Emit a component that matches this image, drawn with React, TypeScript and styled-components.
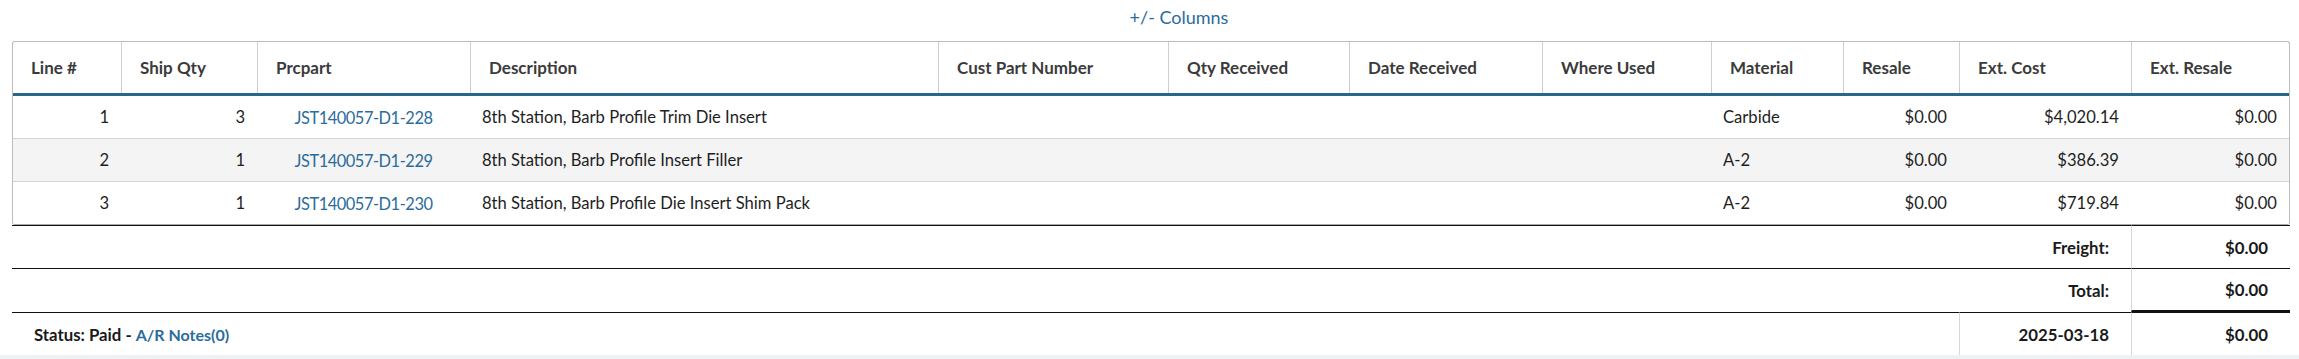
import React from "react";
import styled, { createGlobalStyle } from "styled-components";

const GlobalStyle = createGlobalStyle`
  html, body {
    margin: 0;
    padding: 0;
    background: #eef2f2;
  }
  body {
    font-family: Lato, "Open Sans", "Liberation Sans", sans-serif;
    color: #222;
  }
  * { box-sizing: border-box; }
`;

const COLS = "108px 136px 213px 468px 230px 181px 193px 169px 132px 116px 172px 158px";

const Page = styled.div`
  background: #ffffff;
  padding: 0 9px 0 12px;
`;

const ToggleBar = styled.div`
  height: 41px;
  display: flex;
  justify-content: center;
  align-items: flex-start;
  padding-top: 5px;
  padding-left: 56px;
`;

const ToggleLink = styled.a`
  color: #2b6c9c;
  font-size: 18px;
  line-height: 24px;
  text-decoration: none;
  cursor: pointer;
`;

const Table = styled.div`
  border: 1px solid #bcbcbc;
  border-bottom-color: #a8a8a8;
  border-radius: 3px;
  overflow: hidden;
`;

const HeadRow = styled.div`
  display: grid;
  grid-template-columns: ${COLS};
  height: 54px;
  border-bottom: 3px solid #2b6587;
`;

const HeadCell = styled.div`
  display: flex;
  align-items: center;
  padding: 0 18px;
  font-size: 17px;
  font-weight: 700;
  color: #3b3b3b;
  white-space: nowrap;
  & + & {
    border-left: 1px solid #cfcfcf;
  }
`;

const BodyRow = styled.div<{ $striped?: boolean; $first?: boolean }>`
  display: grid;
  grid-template-columns: ${COLS};
  height: ${(p) => (p.$first ? "42px" : "43px")};
  background: ${(p) => (p.$striped ? "#f4f4f4" : "#ffffff")};
  border-top: ${(p) => (p.$first ? "none" : "1px solid #d4d4d4")};
`;

const Cell = styled.div<{ $align?: "left" | "right" | "center" }>`
  display: flex;
  align-items: center;
  justify-content: ${(p) =>
    p.$align === "right" ? "flex-end" : p.$align === "center" ? "center" : "flex-start"};
  padding: 0 12px;
  font-size: 16.6px;
  color: #1e1e1e;
  white-space: nowrap;
`;

const PartLink = styled.a`
  color: #2b6c9c;
  text-decoration: none;
  font-size: 16.4px;
  letter-spacing: -0.45px;
`;

const Footer = styled.div`
  display: grid;
  grid-template-columns: 1fr 172px 159px;
`;

const FootCell = styled.div<{ $span?: boolean; $divider?: boolean; $thick?: boolean; $h: number; $align?: "left" | "right" }>`
  grid-column: ${(p) => (p.$span ? "1 / 3" : "auto")};
  height: ${(p) => p.$h}px;
  border-top: 1px solid #111;
  border-left: ${(p) => (p.$divider ? "1px solid #d8d8d8" : "none")};
  border-bottom: ${(p) => (p.$thick ? "2px solid #111" : "none")};
  display: flex;
  align-items: center;
  justify-content: ${(p) => (p.$align === "left" ? "flex-start" : "flex-end")};
  padding: 0 22px;
  font-size: 16.8px;
  font-weight: 700;
  color: #1a1a1a;
  white-space: nowrap;
`;

const NotesLink = styled.a`
  color: #2b6c9c;
  text-decoration: none;
  font-weight: 700;
  font-size: 16px;
  margin-left: 4px;
`;

const BottomStrip = styled.div`
  height: 4px;
  background: #eef2f2;
`;

const headers = [
  "Line #",
  "Ship Qty",
  "Prcpart",
  "Description",
  "Cust Part Number",
  "Qty Received",
  "Date Received",
  "Where Used",
  "Material",
  "Resale",
  "Ext. Cost",
  "Ext. Resale",
];

const rows = [
  { line: "1", qty: "3", part: "JST140057-D1-228", desc: "8th Station, Barb Profile Trim Die Insert", material: "Carbide", resale: "$0.00", cost: "$4,020.14", extResale: "$0.00" },
  { line: "2", qty: "1", part: "JST140057-D1-229", desc: "8th Station, Barb Profile Insert Filler", material: "A-2", resale: "$0.00", cost: "$386.39", extResale: "$0.00" },
  { line: "3", qty: "1", part: "JST140057-D1-230", desc: "8th Station, Barb Profile Die Insert Shim Pack", material: "A-2", resale: "$0.00", cost: "$719.84", extResale: "$0.00" },
];

export default function App() {
  return (
    <>
      <GlobalStyle />
      <Page>
        <ToggleBar>
          <ToggleLink>+/- Columns</ToggleLink>
        </ToggleBar>
        <Table>
          <HeadRow>
            {headers.map((h) => (
              <HeadCell key={h}>{h}</HeadCell>
            ))}
          </HeadRow>
          {rows.map((r, i) => (
            <BodyRow key={r.line} $first={i === 0} $striped={i % 2 === 1}>
              <Cell $align="right">{r.line}</Cell>
              <Cell $align="right">{r.qty}</Cell>
              <Cell $align="center">
                <PartLink>{r.part}</PartLink>
              </Cell>
              <Cell>{r.desc}</Cell>
              <Cell />
              <Cell />
              <Cell />
              <Cell />
              <Cell>{r.material}</Cell>
              <Cell $align="right">{r.resale}</Cell>
              <Cell $align="right">{r.cost}</Cell>
              <Cell $align="right">{r.extResale}</Cell>
            </BodyRow>
          ))}
        </Table>
        <Footer>
          <FootCell $span $h={43}>Freight:</FootCell>
          <FootCell $divider $h={43}>$0.00</FootCell>
          <FootCell $span $h={44}>Total:</FootCell>
          <FootCell $divider $thick $h={44}>$0.00</FootCell>
          <FootCell $align="left" $h={43}>
            Status: Paid -<NotesLink>A/R Notes(0)</NotesLink>
          </FootCell>
          <FootCell $divider $h={43}>2025-03-18</FootCell>
          <FootCell $divider $h={43}>$0.00</FootCell>
        </Footer>
      </Page>
      <BottomStrip />
    </>
  );
}
